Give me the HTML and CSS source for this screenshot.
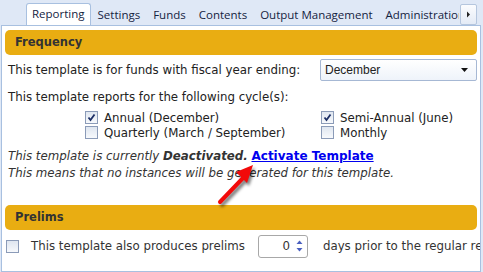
FILE: index.html
```html
<!DOCTYPE html>
<html>
<head>
<meta charset="utf-8">
<link rel="stylesheet" href="styles.css">
</head>
<body>
<div class="tabbar">
  <div class="tabs">
    <div class="tab active">Reporting</div>
    <div class="tab">Settings</div>
    <div class="tab">Funds</div>
    <div class="tab">Contents</div>
    <div class="tab">Output Management</div>
    <div class="tab">Administration</div>
  </div>
  <div class="scroll-btn"><svg width="5" height="7" viewBox="0 0 5 7"><path d="M1 0.5 L4 3.5 L1 6.5 Z" fill="#222"/></svg></div>
</div>
<div class="panel">
  <div class="header">Frequency</div>
  <div class="row fiscal">
    <span class="label">This template is for funds with fiscal year ending:</span>
    <div class="select"><span>December</span><svg width="7" height="4" viewBox="0 0 7 4"><path d="M0 0 H7 L3.5 4 Z" fill="#111"/></svg></div>
  </div>
  <div class="row cycles">This template reports for the following cycle(s):</div>
  <div class="checks">
    <label class="check"><span class="box"><svg width="9" height="9" viewBox="0 0 9 9"><path d="M1.5 4.5 L3.5 7 L7.5 1.5" fill="none" stroke="#1c2f66" stroke-width="1.8"/></svg></span>Annual (December)</label>
    <label class="check"><span class="box"><svg width="9" height="9" viewBox="0 0 9 9"><path d="M1.5 4.5 L3.5 7 L7.5 1.5" fill="none" stroke="#1c2f66" stroke-width="1.8"/></svg></span>Semi-Annual (June)</label>
    <label class="check"><span class="box"></span>Quarterly (March / September)</label>
    <label class="check"><span class="box"></span>Monthly</label>
  </div>
  <div class="status">
    <p>This template is currently <b>Deactivated.</b> <a href="#" class="activate">Activate Template</a></p>
    <p>This means that no instances will be generated for this template.</p>
    <svg class="arrow" width="60" height="50" viewBox="0 0 60 50">
      <defs><filter id="sh" x="-30%" y="-30%" width="160%" height="160%"><feGaussianBlur stdDeviation="1.6"/></filter></defs>
      <g transform="translate(2,3)" opacity="0.5" filter="url(#sh)">
        <path d="M4 41 L27 17" stroke="#000" stroke-width="4" stroke-linecap="round"/>
        <path d="M37 4 L20 11 L31 22 Z" fill="#000"/>
      </g>
      <path d="M4 41 L27 17" stroke="#f20a0a" stroke-width="4" stroke-linecap="round"/>
      <path d="M37 4 L20 11 L31 22 Z" fill="#f20a0a"/>
    </svg>
  </div>
  <div class="header">Prelims</div>
  <div class="row prelims">
    <span class="box"></span>
    <span class="ptext">This template also produces prelims</span>
    <div class="spinner"><span>0</span><svg width="7" height="14" viewBox="0 0 7 14"><path d="M0.5 5 L3.5 1.5 L6.5 5 Z" fill="#4a5fbf"/><path d="M0.5 9 L3.5 12.5 L6.5 9 Z" fill="#4a5fbf"/></svg></div>
    <span class="ptext after">days prior to the regular reporting date</span>
  </div>
</div>
</body>
</html>
```
FILE: styles.css
```css
html, body {
  margin: 0;
  padding: 0;
  width: 483px;
  height: 272px;
  overflow: hidden;
  background: #dfe8f6;
  font-family: "DejaVu Sans", Verdana, sans-serif;
  font-size: 11.8px;
  color: #333;
}
.tabbar {
  height: 25px;
  position: relative;
}
.tabs {
  display: flex;
  align-items: flex-end;
  height: 25px;
  box-sizing: border-box;
  padding-left: 26px;
  width: 459px;
  overflow: hidden;
  white-space: nowrap;
}
.tab {
  height: 20px;
  line-height: 20px;
  padding: 0 5px;
  margin-right: 1px;
  font-family: "Open Sans", "DejaVu Sans", sans-serif;
  font-size: 11.5px;
  color: #15233f;
  border: 1px solid transparent;
  border-bottom: none;
  flex-shrink: 0;
}
.tab.active {
  background: #fff;
  border-color: #a8c0e0;
  border-radius: 3px 3px 0 0;
  height: 21px;
  position: relative;
  z-index: 1;
}
.scroll-btn {
  position: absolute;
  right: 6px;
  top: 4px;
  width: 15px;
  height: 19px;
  background: linear-gradient(#fbfcfe, #e4ebf6);
  border: 1px solid #b5c6de;
  border-radius: 2px;
  display: flex;
  align-items: center;
  justify-content: center;
}
.panel {
  background: #fff;
  margin: 0 2px 0 1px;
  border: 1px solid #a8c0e0;
  box-sizing: border-box;
  height: 247px;
  padding: 4px 3px 0 3px;
  overflow: hidden;
}
.header {
  background: #e9ad12;
  border-radius: 5px;
  height: 25px;
  line-height: 25px;
  padding-left: 10px;
  font-weight: bold;
  font-size: 11.5px;
  color: #333;
}
.row {
  display: flex;
  align-items: center;
  padding-left: 3px;
}
.fiscal {
  height: 24px;
  margin-top: 3px;
  justify-content: space-between;
}
.label { color: #222; }
.select {
  width: 157px;
  height: 22px;
  box-sizing: border-box;
  border: 1px solid #a6b8d4;
  border-radius: 2px;
  background: linear-gradient(#fff, #eef3fa);
  display: flex;
  align-items: center;
  justify-content: space-between;
  padding: 0 8px 0 4px;
  font-family: "Liberation Sans", Arial, sans-serif;
  font-size: 12px;
  color: #222;
}
.cycles {
  height: 26px;
  margin-top: 2px;
  color: #222;
}
.checks {
  display: grid;
  grid-template-columns: 236px auto;
  padding-left: 80px;
}
.check {
  display: flex;
  align-items: center;
  height: 15px;
  color: #222;
}
.box {
  width: 13px;
  height: 13px;
  box-sizing: border-box;
  border: 1px solid #8b9bb8;
  background: linear-gradient(#dfe6f0, #f7f9fc);
  display: inline-flex;
  align-items: center;
  justify-content: center;
  margin-right: 6px;
  flex-shrink: 0;
}
.status {
  position: relative;
  padding-left: 3px;
  margin-top: 8px;
  height: 57px;
}
.status p {
  margin: 0;
  font-style: italic;
  line-height: 17px;
  color: #333;
}
.status b { color: #333; }
.activate {
  font-style: normal;
  font-weight: bold;
  color: #0000ee;
  text-decoration: underline;
  font-size: 12px;
}
.arrow {
  position: absolute;
  left: 211px;
  top: 13px;
}
.prelims {
  height: 32px;
  padding-left: 1px;
  white-space: nowrap;
}
.prelims .box { margin-right: 12px; }
.ptext { color: #333; flex-shrink: 0; }
.spinner {
  width: 50px;
  height: 23px;
  margin-left: 13px;
  border: 1px solid #a8a8a8;
  border-radius: 3px;
  display: flex;
  align-items: center;
  justify-content: flex-end;
  box-sizing: border-box;
  padding-right: 4px;
  gap: 6px;
  flex-shrink: 0;
}
.after { margin-left: 15px; }
```
